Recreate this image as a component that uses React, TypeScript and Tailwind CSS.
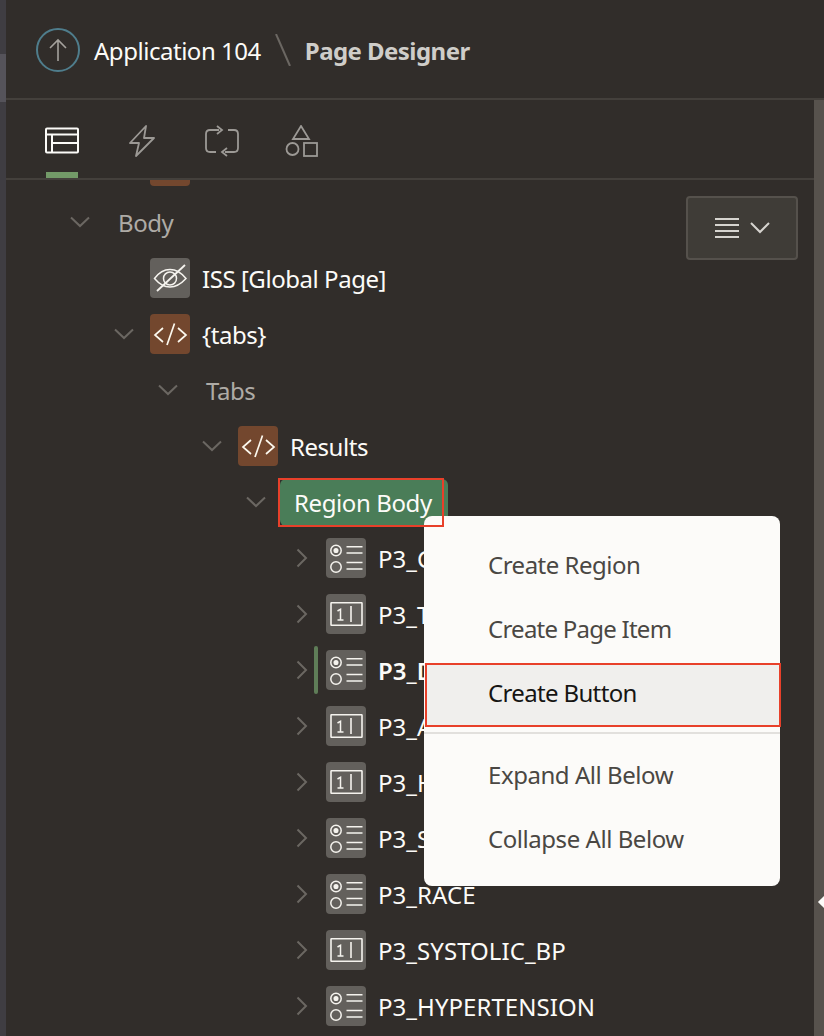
import React from "react";

const font = "font-['Noto_Sans','Open_Sans',sans-serif]";

function Chevron({ open }: { open: boolean }) {
  return (
    <svg width="20" height="20" viewBox="0 0 20 20" fill="none" stroke="#6b6762" strokeWidth="2" className="shrink-0">
      {open ? <path d="M1 5.5 L10 14 L19 5.5" /> : <path d="M5.5 1.5 L14 10 L5.5 18.5" />}
    </svg>
  );
}

function CodeIcon() {
  return (
    <div className="w-10 h-10 rounded bg-[#73472e] shrink-0">
      <svg width="40" height="40" viewBox="0 0 40 40" fill="none" stroke="#fcf8ee" strokeWidth="1.7">
        <path d="M13 14 L5 21 L13 28" />
        <path d="M24.5 9.5 L17 31" />
        <path d="M28 14 L36 21 L28 28" />
      </svg>
    </div>
  );
}

function HiddenIcon() {
  return (
    <div className="w-10 h-10 rounded bg-[#63605c] shrink-0">
      <svg width="40" height="40" viewBox="0 0 40 40" fill="none" stroke="#f5f3ee" strokeWidth="1.5">
        <path d="M4.5 20.5 C10 13 15 11.5 20 11.5 C25 11.5 30 13 36 20.5 C30 27 25 29 20 29 C15 29 10 27 4.5 20.5 Z" />
        <circle cx="20" cy="20.5" r="6.5" />
        <path d="M7 33 L35 7" strokeWidth="1.8" />
      </svg>
    </div>
  );
}

function RadioIcon() {
  return (
    <div className="w-10 h-10 rounded bg-[#63605c] shrink-0">
      <svg width="40" height="40" viewBox="0 0 40 40" fill="none" stroke="#f5f3ee" strokeWidth="1.5">
        <circle cx="10" cy="12.5" r="5.2" />
        <circle cx="10" cy="12.5" r="1.8" fill="#f5f3ee" />
        <circle cx="10" cy="29" r="5.2" />
        <path d="M20.5 8.7 H36.5 M20.5 15 H36.5 M20.5 24.5 H36.5 M20.5 31 H36.5" />
      </svg>
    </div>
  );
}

function NumberIcon() {
  return (
    <div className="w-10 h-10 rounded bg-[#63605c] shrink-0">
      <svg width="40" height="40" viewBox="0 0 40 40" fill="none" stroke="#f5f3ee" strokeWidth="1.6">
        <rect x="5" y="8.8" width="31" height="22.4" rx="0.5" />
        <path d="M11.5 17 L14.5 15.2 V26 M11.5 26 H17.5" strokeWidth="1.5" />
        <path d="M25 12 V28" />
      </svg>
    </div>
  );
}

type Row = {
  label: string;
  indent: number;
  open: boolean;
  icon?: "code" | "hidden" | "radio" | "number";
  dim?: boolean;
  bold?: boolean;
  mark?: boolean;
  caps?: boolean;
};

const rows: Row[] = [
  { label: "Body", indent: 70, open: true, dim: true },
  { label: "ISS [Global Page]", indent: 150, open: true, icon: "hidden" },
  { label: "{tabs}", indent: 114, open: true, icon: "code" },
  { label: "Tabs", indent: 158, open: true, dim: true },
  { label: "Results", indent: 202, open: true, icon: "code" },
  { label: "P3_GENDER", indent: 292, open: false, icon: "radio", caps: true },
  { label: "P3_TEMP", indent: 292, open: false, icon: "number", caps: true },
  { label: "P3_DIABETES", indent: 292, open: false, icon: "radio", bold: true, mark: true, caps: true },
  { label: "P3_AGE", indent: 292, open: false, icon: "number", caps: true },
  { label: "P3_HEART_RATE", indent: 292, open: false, icon: "number", caps: true },
  { label: "P3_SMOKER", indent: 292, open: false, icon: "radio", caps: true },
  { label: "P3_RACE", indent: 292, open: false, icon: "radio", caps: true },
  { label: "P3_SYSTOLIC_BP", indent: 292, open: false, icon: "number", caps: true },
  { label: "P3_HYPERTENSION", indent: 292, open: false, icon: "radio", caps: true },
];

function TreeRow({ row }: { row: Row }) {
  const hasToggle = row.label !== "ISS [Global Page]";
  return (
    <div className="relative h-14 flex items-center shrink-0">
      {row.mark && <div className="absolute left-[308px] top-[4px] w-[4px] h-12 rounded-sm bg-[#5f7d58]" />}
      <div className="flex items-center" style={{ marginLeft: row.indent - 6 }}>
        {hasToggle && <Chevron open={row.open} />}
        {row.icon && (
          <div style={{ marginLeft: !hasToggle ? 0 : row.open ? 16 : 14 }}>
            {row.icon === "code" && <CodeIcon />}
            {row.icon === "hidden" && <HiddenIcon />}
            {row.icon === "radio" && <RadioIcon />}
            {row.icon === "number" && <NumberIcon />}
          </div>
        )}
        <span
          className={
            "whitespace-nowrap text-[24px] leading-8 pt-[2px] " +
            (row.icon ? "ml-3 " : "ml-7 ") +
            (row.caps ? "tracking-[0.05px] " : "tracking-[-0.45px] ") +
            (row.dim ? "text-[#aeaba6] " : "text-[#fcfbf8] ") +
            (row.bold ? "font-semibold" : "")
          }
        >
          {row.label}
        </span>
      </div>
    </div>
  );
}

export default function App() {
  return (
    <div className={"relative w-[824px] h-[1036px] overflow-hidden bg-[#312d2a] flex " + font}>
      <div className="w-[6px] shrink-0 bg-[#3f3d42] flex flex-col">
        <div className="mt-[54px] h-[48px] bg-[#55535a]" />
      </div>

      <div className="flex-1 min-w-0 flex flex-col">
        <header className="h-[100px] shrink-0 border-b-2 border-[#44403c] flex items-center pl-[30px] pt-[2px]">
          <div className="w-11 h-11 rounded-full border-2 border-[#4f7d8c] flex items-center justify-center">
            <svg width="20" height="24" viewBox="0 0 20 24" fill="none" stroke="#a5a29d" strokeWidth="1.6">
              <path d="M10 23 V2 M2 10 L10 2 L18 10" />
            </svg>
          </div>
          <span className="ml-[14px] pt-[2px] text-[24px] tracking-[-0.47px] text-[#fcfbf8] whitespace-nowrap">Application 104</span>
          <svg width="16" height="32" viewBox="0 0 16 32" fill="none" stroke="#6b6762" strokeWidth="2" className="ml-[14px]">
            <path d="M1 0 L15 32" />
          </svg>
          <span className="ml-[14px] pt-[2px] text-[24px] tracking-[-0.55px] font-bold text-[#cfcdc9] whitespace-nowrap">Page Designer</span>
        </header>

        <div className="flex-1 min-h-0 flex">
          <div className="flex-1 min-w-0 flex flex-col">
            <nav className="relative h-[80px] shrink-0 border-b-2 border-[#44403c] flex items-center">
              <div className="absolute left-[40px] bottom-0 w-8 h-[6px] bg-[#739a68]" />
              <div className="flex items-center pt-[4px]">
                <svg width="34" height="28" viewBox="0 0 34 28" fill="none" stroke="#fcfbf8" strokeWidth="2" className="ml-[39px]">
                  <rect x="1" y="1.5" width="32" height="24" rx="1" />
                  <path d="M1 7.5 H33 M7 7.5 V25.5 M7 16 H33" />
                </svg>
                <svg width="26" height="32" viewBox="0 0 26 32" fill="none" stroke="#9c9995" strokeWidth="1.8" strokeLinejoin="round" className="ml-[50px]">
                  <path d="M17 1 L1 18 H10 L7 31 L25 13 H15 Z" />
                </svg>
                <svg width="34" height="32" viewBox="0 0 34 32" fill="none" stroke="#9c9995" strokeWidth="1.8" className="ml-[50px]">
                  <path d="M14 5 H5 Q1 5 1 9 V23 Q1 27 5 27 H11" />
                  <path d="M20 27 H29 Q33 27 33 23 V9 Q33 5 29 5 H23" />
                  <path d="M12 1 L17 5 L12 9" />
                  <path d="M22 23 L17 27 L22 31" />
                </svg>
                <svg width="34" height="32" viewBox="0 0 34 32" fill="none" stroke="#9c9995" strokeWidth="1.8" className="ml-[46px]">
                  <path d="M16 1 L24 14 H8 Z" />
                  <circle cx="7.5" cy="24" r="6" />
                  <rect x="19" y="18" width="13" height="13" />
                </svg>
              </div>
            </nav>

            <div className="relative flex-1 min-h-0 overflow-hidden">
              <div className="absolute left-[144px] -top-[2px] w-10 h-[8px] rounded-b bg-[#73472e]" />
              <div className="absolute right-[16px] top-[16px] w-[112px] h-[64px] rounded border-2 border-[#55514c] bg-[#3f3c37] flex items-center justify-center gap-[10px]">
                <svg width="26" height="22" viewBox="0 0 26 22" fill="none" stroke="#d6d4cf" strokeWidth="2">
                  <path d="M1 2 H25 M1 8 H25 M1 14 H25 M1 20 H25" />
                </svg>
                <svg width="20" height="12" viewBox="0 0 20 12" fill="none" stroke="#d6d4cf" strokeWidth="2">
                  <path d="M1 1 L10 10 L19 1" />
                </svg>
              </div>

              <div className="flex flex-col pt-[14px]">
                {rows.slice(0, 5).map((r) => (
                  <TreeRow key={r.label} row={r} />
                ))}
                <div className="relative h-14 flex items-center shrink-0">
                  <div className="ml-[240px]"><Chevron open /></div>
                  <div className="relative ml-[14px] mt-[1px] h-[47px] w-[168px] rounded-md bg-[#4a7d58] flex items-center pl-[14px] text-[24px] tracking-[-0.4px] text-[#fcfbf8] whitespace-nowrap">
                    Region Body
                    <div className="absolute z-10 -left-[2px] -top-[1px] w-[166px] h-[49px] border-2 border-[#e8402a]" />
                  </div>
                </div>
                {rows.slice(5).map((r) => (
                  <TreeRow key={r.label} row={r} />
                ))}
              </div>
            </div>
          </div>

          <div className="w-[10px] shrink-0 bg-[#57524d]" />
        </div>
      </div>

      <div className="absolute left-[424px] top-[516px] w-[356px] h-[370px] rounded-lg bg-[#fcfbf9] py-[17px] text-[24px] whitespace-nowrap">
        <div className="h-16 flex items-center pl-16 tracking-[-0.5px] text-[#4a4743]">Create Region</div>
        <div className="h-16 flex items-center pl-16 tracking-[-0.75px] text-[#4a4743]">Create Page Item</div>
        <div className="mt-[2px] ml-px -mr-px h-16 flex items-center pl-[61px] pb-[4px] tracking-[-0.65px] bg-[#f0efed] text-[#161513] border-2 border-[#e8402a]">Create Button</div>
        <div className="h-[2px] mt-[5px] mb-[9px] bg-[#e2e0dd]" />
        <div className="h-16 flex items-center pl-16 tracking-[-0.45px] text-[#4a4743]">Expand All Below</div>
        <div className="h-16 flex items-center pl-16 tracking-[-0.45px] text-[#4a4743]">Collapse All Below</div>
      </div>

      <div className="absolute left-[820px] top-[897px] w-[10px] h-[10px] rotate-45 bg-[#fcfbf9]" />
    </div>
  );
}
